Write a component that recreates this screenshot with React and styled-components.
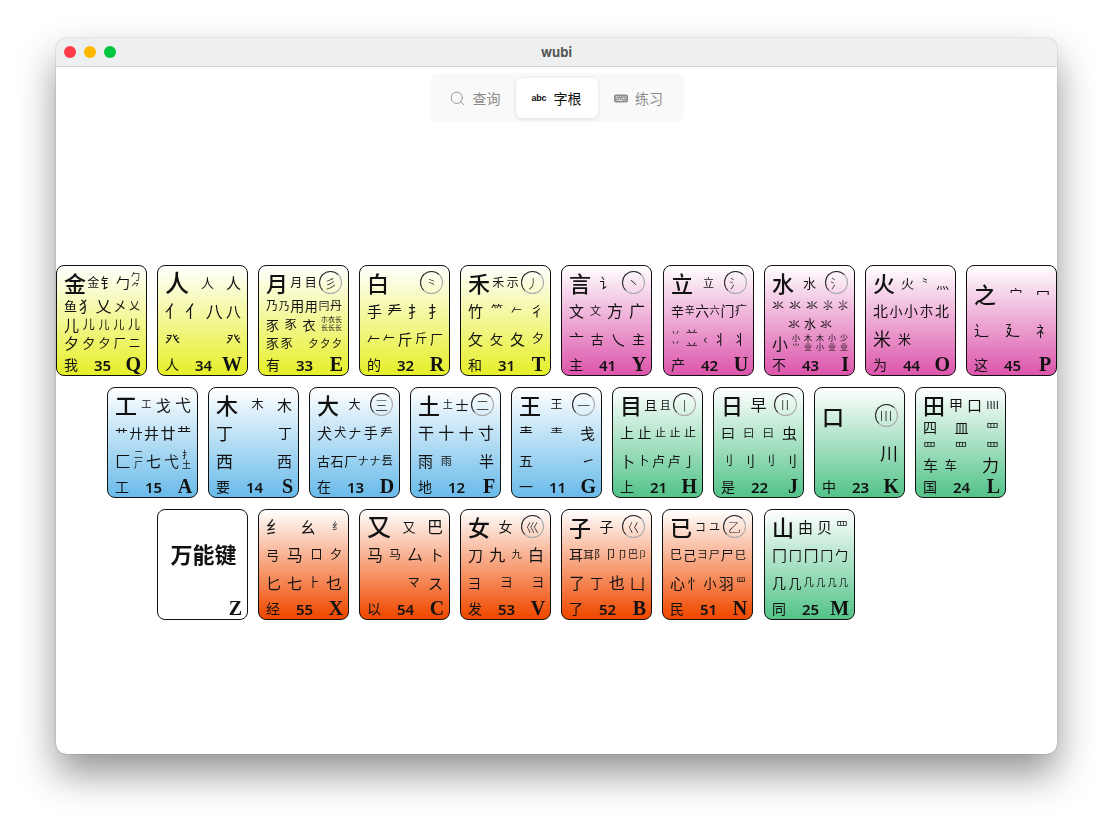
import React from "react";
import styled, { createGlobalStyle } from "styled-components";
import { Search } from "lucide-react";
import { BsKeyboardFill } from "react-icons/bs";

const GlobalStyle = createGlobalStyle`
  html, body {
    margin: 0;
    height: 828px;
    overflow: hidden;
    background: #fff;
    font-family: "Inter", "Noto Sans CJK SC", sans-serif;
  }
`;

const Page = styled.div`
  padding: 38px 56px 0;
`;

const Window = styled.div`
  width: 1001px;
  height: 716px;
  background: #fff;
  border-radius: 10px;
  overflow: hidden;
  box-shadow: 0 0 1px rgba(0, 0, 0, 0.6), 0 20px 38px rgba(0, 0, 0, 0.42);
`;

const TitleBar = styled.div`
  position: relative;
  display: flex;
  align-items: center;
  justify-content: center;
  height: 28px;
  background: #eeeff1;
  border-bottom: 1px solid #d6d6d6;
  font-size: 13px;
  font-weight: 700;
  color: #555;
`;

const Lights = styled.div`
  position: absolute;
  left: 8px;
  top: 8px;
  display: flex;
  gap: 8px;
`;

const Light = styled.span`
  width: 12px;
  height: 12px;
  border-radius: 50%;
  background: ${(p) => p.$color};
`;

const TabBar = styled.div`
  display: flex;
  width: fit-content;
  margin: 6px auto 0;
  padding: 5px 4px 4px;
  background: #f9f9f9;
  border-radius: 8px;
`;

const Tab = styled.div`
  display: flex;
  align-items: center;
  justify-content: center;
  gap: 7px;
  width: 82px;
  height: 40px;
  box-sizing: border-box;
  border-radius: 6px;
  font-size: 14px;
  font-family: "Noto Sans CJK SC", sans-serif;
  color: ${(p) => (p.$active ? "#111" : "#8c8c8c")};
  background: ${(p) => (p.$active ? "#fff" : "transparent")};
  box-shadow: ${(p) => (p.$active ? "0 1px 4px rgba(0,0,0,.12)" : "none")};
`;

const AbcMark = styled.span`
  font-family: "Liberation Sans", sans-serif;
  font-size: 9px;
  font-weight: 700;
  letter-spacing: -0.3px;
  width: 15px;
`;

const Board = styled.div`
  display: flex;
  flex-direction: column;
  gap: 11px;
  margin-top: 143px;
`;

const KeyRow = styled.div`
  display: flex;
  gap: 10px;
  padding-left: ${(p) => p.$indent}px;
`;

const Key = styled.div`
  flex: none;
  display: flex;
  flex-direction: column;
  width: 91.1px;
  height: 111px;
  box-sizing: border-box;
  border: 1px solid #111;
  border-radius: 8px;
  background: linear-gradient(#fff, ${(p) => p.$tone} 98%);
  font-family: "Noto Sans CJK SC", sans-serif;
  color: #111;
  will-change: transform;
`;

const Rows = styled.div`
  flex: 1;
  display: flex;
  flex-direction: column;
  padding: ${(p) => (p.$drop ? 13 : 2)}px 6px 0 7px;
  min-height: 0;
`;

const Row = styled.div`
  display: flex;
  align-items: center;
  justify-content: space-between;
  flex: 1;
  min-height: 0;
  &:first-child {
    flex: 0 0 28px;
  }
`;

const Glyph = styled.span`
  font-size: ${(p) => p.$size}px;
  line-height: 1;
  white-space: nowrap;
  font-weight: ${(p) => (p.$size >= 22 ? 500 : 400)};
`;

const Stack = styled.span`
  display: flex;
  flex-direction: column;
  align-items: center;
  font-size: ${(p) => p.$size}px;
  line-height: 1.1;
  white-space: nowrap;
`;

const Gap = styled.span`
  width: 12px;
`;

const Circle = styled.span`
  display: flex;
  align-items: center;
  justify-content: center;
  flex: none;
  width: 23px;
  height: 23px;
  box-sizing: border-box;
  border: 1px solid;
  border-color: #222 #aaa #aaa #222;
  border-radius: 50%;
  font-size: 13px;
  line-height: 1;
  letter-spacing: ${(p) => (p.$bars ? "1px" : "0")};
  font-weight: 300;
`;

const Footer = styled.div`
  display: grid;
  grid-template-columns: 1fr auto 1fr;
  align-items: end;
  height: 23px;
  padding: 0 5px 0 7px;
`;

const Word = styled.span`
  font-size: 14px;
  line-height: 21px;
`;

const Code = styled.span`
  font-family: "Noto Sans", sans-serif;
  font-size: 15px;
  font-weight: 600;
  line-height: 19px;
`;

const Letter = styled.span`
  justify-self: end;
  font-family: "Liberation Serif", serif;
  font-size: 20px;
  font-weight: 700;
  line-height: 22px;
`;

const Wildcard = styled.div`
  flex: 1;
  display: flex;
  align-items: center;
  justify-content: center;
  padding-left: 2px;
  font-size: 22px;
  font-weight: 700;
`;

const YELLOW = "#e6ef2c";
const PINK = "#dd58ad";
const BLUE = "#6cbcea";
const GREEN = "#56c48b";
const ORANGE = "#ef4a00";

// rows: cells split by spaces. "x14" glyph, "a,b11" stacked, "(x)" ring, "_" empty
const row1 = [
  { tone: YELLOW, word: "我", code: 35, letter: "Q", rows: ["金22 金12 钅14 勹14 勹,⺈9", "鱼13 犭15 乂16 㐅14 乂11", "儿15 儿12 儿11 儿11 儿12", "夕15 夕13 夕12 厂12 二11"] },
  { tone: YELLOW, word: "人", code: 34, letter: "W", rows: ["人24 人13 人15", "亻17 亻17 八17 八15", "癶15 _ 癶15"] },
  { tone: YELLOW, word: "有", code: 33, letter: "E", rows: ["月22 月12 目12 (彡)", "乃12 乃11 用14 用13 冃11 丹12", "豕13 豕12 衣13 朩衣长,长长长7", "豕13 豕12 _ 夕10 夕10 夕10"] },
  { tone: YELLOW, word: "的", code: 32, letter: "R", rows: ["白22 (⺀)", "手15 龵15 扌15 扌15", "𠂉13 𠂉12 斤15 斤12 厂13"] },
  { tone: YELLOW, word: "和", code: 31, letter: "T", rows: ["禾22 禾12 示12 (丿)", "竹15 ⺮12 𠂉11 彳14", "攵15 攵13 夂15 夕12"] },
  { tone: PINK, word: "主", code: 41, letter: "Y", rows: ["言22 讠14 (丶)", "文15 文11 方16 广16", "亠15 古13 乀15 主13"] },
  { tone: PINK, word: "产", code: 42, letter: "U", rows: ["立22 立11 (氵)", "辛13 辛10 六14 六10 门14 疒12", "丷,丷9 䒑,䒑12 ‹13 丬14 丬14"] },
  { tone: PINK, word: "不", code: 43, letter: "I", rows: ["水22 水13 (氵)", "氺12 氺12 氺12 ⺢10 ⺢10", "_ 氺12 水12 氺12 _", "小16 小,⺌8 木,业8 木,小8 小,业8 少,业8"] },
  { tone: PINK, word: "为", code: 44, letter: "O", rows: ["火22 火13 ⺀10 灬13", "北15 小13 小14 朩14 北14", "米18 米13 _ _"] },
  { tone: PINK, word: "这", code: 45, letter: "P", drop: true, rows: ["之22 宀13 冖14", "辶15 廴15 礻14"] },
];

const row2 = [
  { tone: BLUE, word: "工", code: 15, letter: "A", rows: ["工22 工10 戈15 弋16", "艹13 廾13 井15 廿15 龷14", "匚16 二,ㄏ9 七15 弋15 扌,土9"] },
  { tone: BLUE, word: "要", code: 14, letter: "S", rows: ["木22 木12 木15", "丁17 _ 丁14", "西17 _ 西15"] },
  { tone: BLUE, word: "在", code: 13, letter: "D", rows: ["大22 大12 (三)", "犬15 犬12 𠂇13 手14 龵13", "古13 石13 厂13 ナ11 ナ11 镸12"] },
  { tone: BLUE, word: "地", code: 12, letter: "F", rows: ["土22 土10 士13 (二)", "干16 十16 十15 寸16", "雨15 雨11 _ 半15"] },
  { tone: BLUE, word: "一", code: 11, letter: "G", rows: ["王22 王12 (一)", "龶14 龶13 戋15", "五14 _ ㇀14"] },
  { tone: GREEN, word: "上", code: 21, letter: "H", rows: ["目22 且13 且11 (丨)", "上14 止14 止11 止11 止12", "卜15 卜12 卢13 卢13 亅13"] },
  { tone: GREEN, word: "是", code: 22, letter: "J", rows: ["日22 早16 (II)", "曰14 曰11 曰11 虫15", "刂12 刂14 刂12 刂14"] },
  { tone: GREEN, word: "中", code: 23, letter: "K", drop: true, rows: ["口22 (III)", "_ 川18"] },
  { tone: GREEN, word: "国", code: 24, letter: "L", rows: ["田22 甲14 口15 IIII11", "四14 皿14 罒13", "罒13 罒13 罒13", "车15 车12 _ 力17"] },
];

const row3 = [
  { wildcard: "万能键", letter: "Z" },
  { tone: ORANGE, word: "经", code: 55, letter: "X", rows: ["纟18 幺15 纟10", "弓13 马16 口12 夕12", "匕15 七15 ⺊12 乜16"] },
  { tone: ORANGE, word: "以", code: 54, letter: "C", rows: ["又24 又13 巴16", "马16 马12 厶16 卜14", "_ _ マ12 ス15"] },
  { tone: ORANGE, word: "发", code: 53, letter: "V", rows: ["女22 女14 (巛)", "刀15 九16 九10 白16", "彐13 彐12 彐12"] },
  { tone: ORANGE, word: "了", code: 52, letter: "B", rows: ["子22 子14 (巜)", "耳14 耳11 阝11 卩12 卩11 巴10 卩9", "了16 丁13 也16 凵15"] },
  { tone: ORANGE, word: "民", code: 51, letter: "N", rows: ["已22 コ11 ユ11 (乙)", "巳12 己13 彐10 尸11 尸13 巳11", "心15 忄14 小13 羽15 罒10"] },
  { tone: GREEN, word: "同", code: 25, letter: "M", rows: ["山22 由15 贝15 罒12", "冂15 冂13 冂15 冂13 勹13", "几14 几13 几10 几9 几9 几9"] },
];

const Cell = ({ token }) => {
  if (token === "_") return <Gap />;
  if (token.startsWith("(")) {
    const mark = token.slice(1, -1);
    return <Circle $bars={mark.startsWith("I")}>{mark}</Circle>;
  }
  const [, text, size] = token.match(/^(.+?)(\d+)$/);
  if (text.includes(",")) {
    return (
      <Stack $size={+size}>
        {text.split(",").map((line, i) => (
          <span key={i}>{line}</span>
        ))}
      </Stack>
    );
  }
  return <Glyph $size={+size}>{text}</Glyph>;
};

const KeyCap = ({ data }) => (
  <Key $tone={data.tone || "#fff"}>
    {data.wildcard ? (
      <Wildcard>{data.wildcard}</Wildcard>
    ) : (
      <Rows $drop={data.drop}>
        {data.rows.map((r, i) => (
          <Row key={i}>
            {r.split(" ").map((t, j) => (
              <Cell key={j} token={t} />
            ))}
          </Row>
        ))}
      </Rows>
    )}
    <Footer>
      <Word>{data.word}</Word>
      <Code>{data.code}</Code>
      <Letter>{data.letter}</Letter>
    </Footer>
  </Key>
);

const App = () => (
  <Page>
    <GlobalStyle />
    <Window>
      <TitleBar>
        <Lights>
          <Light $color="#ff3b47" />
          <Light $color="#ffb800" />
          <Light $color="#00c73d" />
        </Lights>
        wubi
      </TitleBar>
      <TabBar>
        <Tab>
          <Search size={17} strokeWidth={1.25} />
          查询
        </Tab>
        <Tab $active>
          <AbcMark>abc</AbcMark>
          字根
        </Tab>
        <Tab>
          <BsKeyboardFill size={14} />
          练习
        </Tab>
      </TabBar>
      <Board>
        <KeyRow $indent={0}>
          {row1.map((k) => (
            <KeyCap key={k.letter} data={k} />
          ))}
        </KeyRow>
        <KeyRow $indent={50.6}>
          {row2.map((k) => (
            <KeyCap key={k.letter} data={k} />
          ))}
        </KeyRow>
        <KeyRow $indent={101}>
          {row3.map((k) => (
            <KeyCap key={k.letter} data={k} />
          ))}
        </KeyRow>
      </Board>
    </Window>
  </Page>
);

export default App;
